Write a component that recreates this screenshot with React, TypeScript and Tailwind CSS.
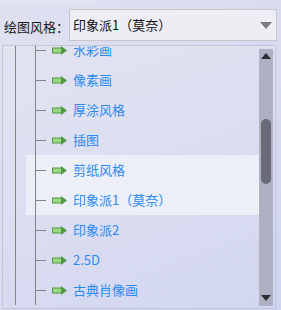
import React from "react";

const items = [
  "水彩画",
  "像素画",
  "厚涂风格",
  "插图",
  "剪纸风格",
  "印象派1（莫奈）",
  "印象派2",
  "2.5D",
  "古典肖像画",
];

function Arrow() {
  return (
    <svg width="15" height="9" viewBox="0 0 15 9" className="shrink-0">
      <rect x="0.5" y="2" width="9" height="5" fill="#9ad883" stroke="#4f9a43" />
      <path d="M9 0 L15 4.5 L9 9 Z" fill="#4f9a43" />
    </svg>
  );
}

export default function App() {
  return (
    <div
      className="w-[281px] h-[310px] overflow-hidden relative"
      style={{
        fontFamily: '"Noto Sans CJK SC", "Noto Sans", sans-serif',
        background:
          "linear-gradient(135deg, #dfe1f1 0%, #d9dcf0 50%, #cfd4f0 100%)",
      }}
    >
      <div className="h-[5px] w-[95px] bg-[#e3e4f1]" />
      <div className="flex items-start h-[40px]">
        <div className="pl-[4px] pt-[15px] text-[13px] leading-[14px] text-[#1a1a1a] whitespace-nowrap">
          绘图风格：
        </div>
        <div className="ml-auto mr-[6px] mt-[4px] w-[208px] shrink-0 h-[32px] border border-[#c6c6cb] bg-[#ededf3] flex items-center pl-[3px] pr-[3px]">
          <span className="text-[13px] text-[#111] whitespace-nowrap">印象派1（莫奈）</span>
          <svg width="12" height="7" viewBox="0 0 12 7" className="ml-auto mr-[1px]">
            <path d="M0 0 H12 L6 7 Z" fill="#7b7b7e" />
          </svg>
        </div>
      </div>
      <div
        className="ml-[2px] w-[274px] h-[264px] border border-[#c3c6d6] flex overflow-hidden"
        style={{
          background:
            "linear-gradient(160deg, #e2e3f1 0%, #dcdff1 45%, #d2d6f0 100%)",
        }}
      >
        <div className="flex-1 overflow-hidden pb-[3px]">
          <div className="mt-[-11px]">
            {items.map((t, i) => {
              const hl = i === 4 || i === 5;
              return (
                <div key={t} className="flex h-[30px]">
                  <div className="w-[23px] shrink-0">
                    <div className="ml-[12px] w-px h-full bg-[#858585]" />
                  </div>
                  <div
                    className={
                      "flex-1 flex items-center relative " +
                      (hl ? "bg-[#edeff8]" : "")
                    }
                  >
                    <div className="absolute left-[9px] top-0 w-px h-full bg-[#858585]" />
                    <div className="ml-[10px] w-[10px] h-px bg-[#858585]" />
                    <div className="ml-[6px] flex">
                      <Arrow />
                    </div>
                    <span className="ml-[6px] text-[13px] leading-[14px] text-[#2a8af0] whitespace-nowrap">
                      {t}
                    </span>
                  </div>
                </div>
              );
            })}
          </div>
        </div>
        <div className="w-[14px] mr-[2px] mt-[3px] mb-[2px] bg-[#aeb0c3] flex flex-col items-center">
          <svg width="10" height="6" viewBox="0 0 10 6" className="mt-[4px]">
            <path d="M0 6 L5 0 L10 6 Z" fill="#2e2e33" />
          </svg>
          <div className="mt-[60px] w-[10px] h-[65px] rounded-full bg-[#6b6b77]" />
          <svg width="10" height="6" viewBox="0 0 10 6" className="mt-auto mb-[5px]">
            <path d="M0 0 L10 0 L5 6 Z" fill="#2e2e33" />
          </svg>
        </div>
      </div>
    </div>
  );
}
